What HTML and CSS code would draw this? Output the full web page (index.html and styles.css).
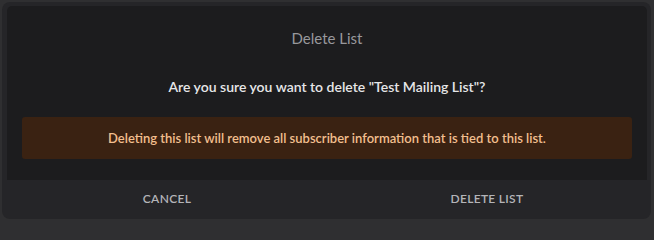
FILE: index.html
```html
<!DOCTYPE html>
<html lang="en">
<head>
<meta charset="utf-8">
<title>Delete List</title>
<link rel="stylesheet" href="styles.css">
</head>
<body>
<div class="dialog">
  <div class="dialog-body">
    <h2 class="dialog-title">Delete List</h2>
    <p class="dialog-question">Are you sure you want to delete "Test Mailing List"?</p>
    <div class="dialog-warning">Deleting this list will remove all subscriber information that is tied to this list.</div>
  </div>
  <div class="dialog-actions">
    <button class="dialog-btn">CANCEL</button>
    <button class="dialog-btn">DELETE LIST</button>
  </div>
</div>
</body>
</html>
```
FILE: styles.css
```css
html {
  background: #2f2f31;
}
html, body {
  margin: 0;
  padding: 0;
}
body {
  width: 654px;
  height: 222px;
  background: #2f2f31;
  font-family: Lato, "Noto Sans", sans-serif;
  overflow: hidden;
}
.dialog {
  margin: 2px 3px 3px 2px;
  height: 217px;
  box-sizing: border-box;
  background: #252528;
  border-radius: 8px;
  padding: 4px 4px 0 5px;
  display: flex;
  flex-direction: column;
}
.dialog-body {
  background: #1c1c1e;
  border-radius: 5px 5px 0 0;
  height: 174px;
  box-sizing: border-box;
  padding: 0 15px;
  display: flex;
  flex-direction: column;
  align-items: stretch;
}
.dialog-title {
  margin: 0;
  padding-top: 23px;
  height: 30px;
  line-height: 18px;
  font-size: 15px;
  font-weight: 400;
  color: #98989c;
  text-align: center;
}
.dialog-question {
  margin: 0;
  padding-top: 19px;
  line-height: 18px;
  height: 18px;
  font-size: 14px;
  font-weight: 600;
  color: #e6e6e8;
  text-align: center;
}
.dialog-warning {
  margin-top: 21px;
  height: 42px;
  background: #3a2212;
  border-radius: 3px;
  color: #f2bf8e;
  font-size: 13px;
  font-weight: 600;
  display: flex;
  align-items: center;
  justify-content: center;
}
.dialog-actions {
  flex: 1;
  display: grid;
  grid-template-columns: 1fr 1fr;
}
.dialog-btn {
  background: transparent;
  border: 0;
  padding: 0;
  font-family: Lato, "Noto Sans", sans-serif;
  font-size: 12px;
  font-weight: 600;
  letter-spacing: 0.3px;
  color: #b4b4b8;
  cursor: pointer;
  padding-bottom: 2px;
}
```
